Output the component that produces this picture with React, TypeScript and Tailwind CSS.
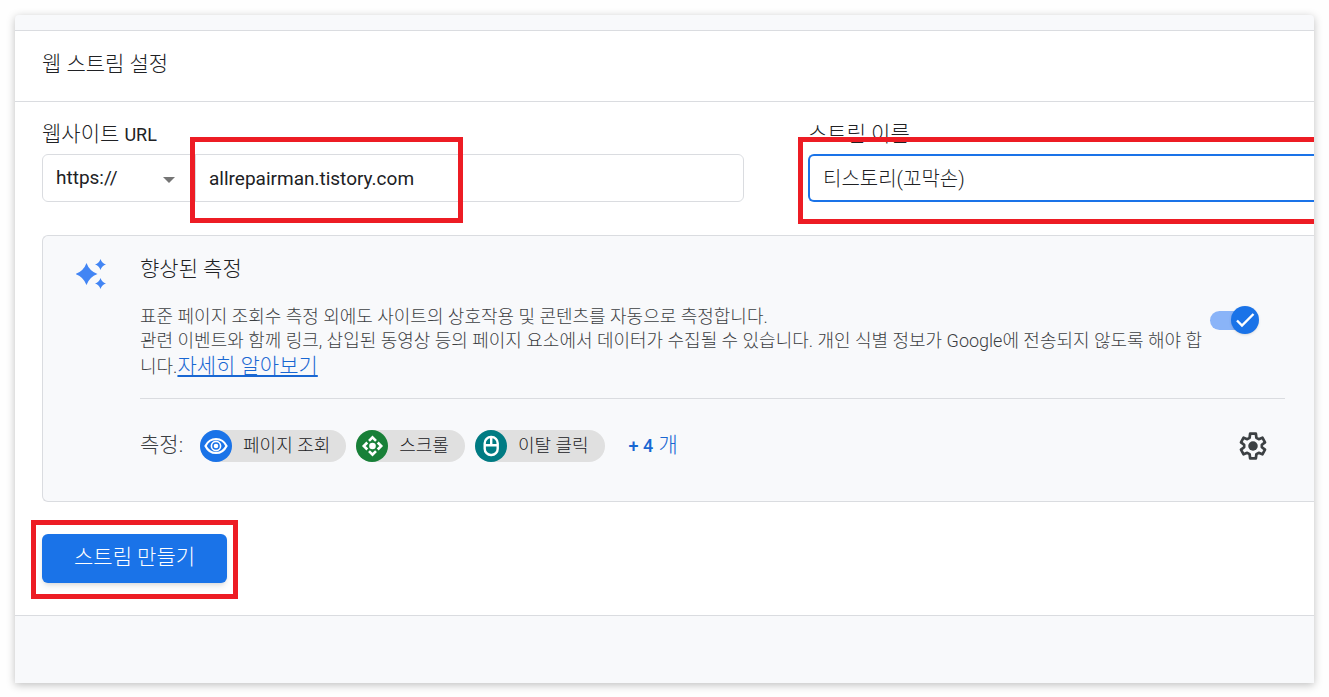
import type { ReactNode } from 'react';

const SparkleIcon = () => (
    <svg width="30" height="30" viewBox="0 0 30 30" fill="#4285f4" aria-hidden="true">
        <path d="M10.5 4Q13.4 12.1 21.5 15Q13.4 17.9 10.5 26Q7.6 17.9 -.5 15Q7.600 12.100 10.500 4Z" />
        <path d="M24.500 0Q25.900 4.100 30 5.500Q25.900 6.900 24.500 11Q23.100 6.900 19 5.500Q23.100 4.100 24.500 0Z" />
        <path d="M24.500 19Q25.900 23.100 30 24.500Q25.900 25.900 24.500 30Q23.100 25.900 19 24.500Q23.100 23.100 24.500 19Z" />
    </svg>
);

const EyeIcon = () => (
    <svg width="32" height="32" viewBox="0 0 32 32" fill="none" stroke="#fff" aria-hidden="true">
        <path d="M5.500 16C7.700 11.500 11.600 9 16 9S24.300 11.500 26.500 16C24.300 20.500 20.400 23 16 23S7.700 20.500 5.500 16Z" strokeWidth="2.200" />
        <circle cx="16" cy="16" r="4.600" strokeWidth="1.600" />
        <circle cx="16" cy="16" r="2.300" fill="#fff" stroke="none" />
    </svg>
);

const ScrollIcon = () => (
    <svg width="32" height="32" viewBox="0 0 32 32" fill="none" aria-hidden="true">
        <circle cx="16.500" cy="16" r="3.300" fill="#fff" />
        <path
            d="M13 10.800L16.500 7.300L20 10.800M13 21.200L16.500 24.700L20 21.200M11.300 12.500L7.800 16L11.300 19.500M21.700 12.500L25.200 16L21.700 19.500"
            stroke="#fff"
            strokeWidth="2.600"
        />
    </svg>
);

const MouseIcon = () => (
    <svg width="32" height="32" viewBox="0 0 32 32" fill="none" stroke="#fff" strokeWidth="2.400" aria-hidden="true">
        <rect x="9.700" y="7" width="13" height="18" rx="6.200" />
        <path d="M9.700 15.200H22.700M16.200 7V15" />
    </svg>
);

const GearIcon = () => (
    <svg width="30" height="30" viewBox="1 1 22 22" fill="none" aria-hidden="true">
        <path
            d="M18.500 12.900V11.100L20.800 9.300L18.900 5.900L16.200 7L14.500 6L14.100 3H9.900L9.500 6L7.800 7L5.100 5.900L3.200 9.300L5.500 11.100V12.900L3.200 14.700L5.100 18.100L7.800 17L9.500 18L9.900 21H14.100L14.500 18L16.200 17L18.900 18.100L20.800 14.700Z"
            stroke="#3c4043"
            strokeWidth="2"
            strokeLinejoin="round"
        />
        <circle cx="12" cy="12" r="3.500" fill="#3c4043" />
    </svg>
);

const chips: { label: string; color: string; icon: ReactNode }[] = [
    { label: '페이지 조회', color: 'bg-[#1a73e8]', icon: <EyeIcon /> },
    { label: '스크롤', color: 'bg-[#188038]', icon: <ScrollIcon /> },
    { label: '이탈 클릭', color: 'bg-[#007b83]', icon: <MouseIcon /> },
];

// Red frame drawn over the step the reader should look at
const Highlight = ({ className }: { className: string }) => (
    <div className={`pointer-events-none absolute border-[#ed1c24] ${className}`} />
);

const StreamFields = () => (
    <div className="grid grid-cols-[702fr_506fr] gap-16 pl-[27px]">
        <div>
            <label htmlFor="site-url" className="block text-[21px] leading-8">
                웹사이트 <span className="text-lg font-normal">URL</span>
            </label>
            <div className="relative mt-1 flex h-12 rounded-md border border-[#dadce0]">
                <div className="relative w-[153px] border-r border-[#dadce0]">
                    <select aria-label="프로토콜" className="h-full w-full appearance-none bg-transparent pl-[13px] text-[19px] font-normal focus:outline-none">
                        <option>https://</option>
                        <option>http://</option>
                    </select>
                    <svg className="pointer-events-none absolute top-[22px] right-5" width="12" height="6" viewBox="0 0 12 6" fill="#757575" aria-hidden="true">
                        <path d="M0 0H12L6 6Z" />
                    </svg>
                </div>
                <input id="site-url" type="text" defaultValue="allrepairman.tistory.com" className="min-w-0 flex-1 bg-transparent pt-0.5 pl-[13px] text-[19px] font-normal focus:outline-none" />
                <Highlight className="-top-[18px] left-[147px] h-[86px] w-[273px] border-[5px]" />
            </div>
        </div>
        <div>
            <label htmlFor="stream-name" className="block text-[21px] leading-8">스트림 이름</label>
            <div className="relative mt-1 h-12">
                <input id="stream-name" type="text" defaultValue="티스토리(꼬막손)" className="h-full w-full rounded-l-md border-2 border-r-0 border-[#1a73e8] bg-transparent pb-0.5 pl-[13px] text-xl focus:outline-none" />
                <Highlight className="-top-[17px] right-0 -left-[10px] h-[87px] border-[5px] border-r-0" />
            </div>
        </div>
    </div>
);

const MeasurementPanel = () => (
    <section className="mt-[33px] ml-[27px] flex rounded-l-md border border-r-0 border-[#dadce0] bg-[#f8f9fb] pt-[17px] pr-[29px] pb-[39px] pl-[33px]">
        <div className="w-16 shrink-0 pt-[6px]">
            <SparkleIcon />
        </div>
        <div className="min-w-0 flex-1">
            <h2 className="text-[21px] leading-8">향상된 측정</h2>
            <div className="mt-5 flex items-start justify-between border-b border-[#dadce0] pb-[19px] text-[#3c4043]">
                <p className="text-lg leading-6 whitespace-nowrap">
                    표준 페이지 조회수 측정 외에도 사이트의 상호작용 및 콘텐츠를 자동으로 측정합니다.
                    <br />
                    관련 이벤트와 함께 링크, 삽입된 동영상 등의 페이지 요소에서 데이터가 수집될 수 있습니다. 개인 식별 정보가 Google에 전송되지 않도록 해야 합
                    <br />
                    니다.
                    <a href="#" className="text-[21px] leading-[26px] text-[#1967d2] underline underline-offset-2">자세히 알아보기</a>
                </p>
                <label className="relative mt-px mr-[26px] flex h-7 w-[49px] shrink-0 items-center">
                    <input type="checkbox" defaultChecked aria-label="향상된 측정" className="peer sr-only" />
                    <span className="h-[19px] w-10 rounded-full bg-[#8ab4f8]" />
                    <span className="absolute right-0 flex size-7 items-center justify-center rounded-full bg-[#1a73e8] shadow">
                        <svg width="20" height="20" viewBox="0 0 20 20" fill="none" stroke="#fff" strokeWidth="2.400" aria-hidden="true">
                            <path d="M2 10.500L7 15.500L18.500 4" />
                        </svg>
                    </span>
                </label>
            </div>
            <div className="mt-[31px] flex h-8 items-center">
                <span className="mr-[17px] text-[21px] text-[#3c4043]">측정:</span>
                <ul className="flex gap-[10px]">
                    {chips.map((chip) => (
                        <li key={chip.label} className="flex h-8 items-center rounded-full bg-[#e0e0e0] pr-4">
                            <span className={`mr-[11px] size-8 rounded-full ${chip.color}`}>{chip.icon}</span>
                            <span className="text-lg leading-8">{chip.label}</span>
                        </li>
                    ))}
                </ul>
                <button type="button" className="ml-6 text-[21px] text-[#1967d2]">
                    <span className="text-lg font-medium">+ 4</span> 개
                </button>
                <button type="button" aria-label="설정" className="mr-[17px] ml-auto">
                    <GearIcon />
                </button>
            </div>
        </div>
    </section>
);

export default function App() {
    return (
        <div className="min-h-screen bg-[#fefefe] p-[15px] font-['Roboto','Noto_Sans_CJK_KR',sans-serif] font-light text-[#202124]">
            <main className="overflow-hidden rounded-t-sm bg-[#f8f9fb] pt-[15px] shadow-[0_2px_8px_rgba(0,0,0,0.25)]">
                <div className="border-y border-[#dadce0] bg-white">
                    <header className="border-b border-[#dadce0] px-[27px] pt-[17px] pb-[21px]">
                        <h1 className="text-[21px] leading-8">웹 스트림 설정</h1>
                    </header>
                    <form className="pt-4 pb-8" onSubmit={(e) => e.preventDefault()}>
                        <StreamFields />
                        <MeasurementPanel />
                        <div className="relative mt-8 ml-[27px] w-fit">
                            <button type="submit" className="block rounded-md bg-[#1a73e8] px-8 pt-[7px] pb-[10px] text-[21px] leading-8 text-white shadow-md">
                                스트림 만들기
                            </button>
                            <Highlight className="-top-[14px] -right-[11px] -bottom-4 -left-[11px] border-[5px]" />
                        </div>
                    </form>
                </div>
                <div className="h-[67px]" />
            </main>
        </div>
    );
}
